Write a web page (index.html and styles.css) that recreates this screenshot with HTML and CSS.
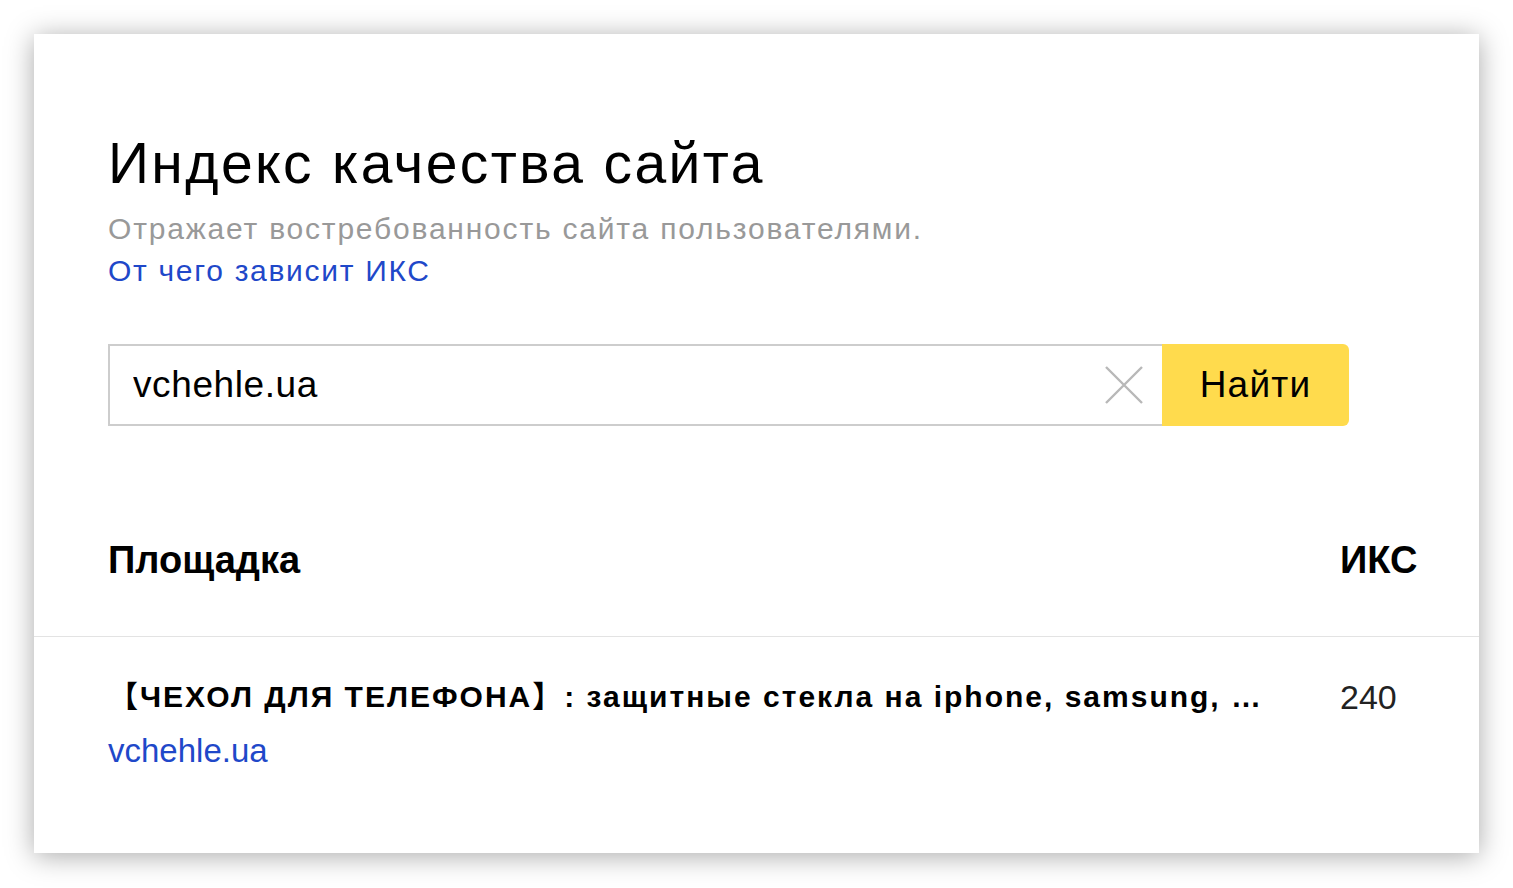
FILE: index.html
```html
<!DOCTYPE html>
<html lang="ru">
<head>
    <meta charset="UTF-8">
    <meta name="viewport" content="width=device-width, initial-scale=1.0">
    <title>Индекс качества сайта</title>
    <link rel="stylesheet" href="styles.css">
</head>
<body>
    <div class="card">
        <div class="card-top">
            <h1 class="title">Индекс качества сайта</h1>
            <p class="subtitle">Отражает востребованность сайта пользователями.</p>
            <a class="more" href="#">От чего зависит ИКС</a>

            <form class="search" onsubmit="return false">
                <div class="search-field">
                    <input type="text" class="search-input" value="vchehle.ua">
                    <button type="button" class="search-clear" aria-label="Очистить">
                        <svg width="38" height="38" viewBox="0 0 38 38">
                            <path d="M1 1 L37 37 M37 1 L1 37" stroke="#b8b8b8" stroke-width="2.4" fill="none"/>
                        </svg>
                    </button>
                </div>
                <button type="submit" class="search-btn">Найти</button>
            </form>
        </div>

        <div class="table">
            <div class="table-head">
                <span class="col-site">Площадка</span>
                <span class="col-iks">ИКС</span>
            </div>
            <div class="table-row">
                <div class="col-site">
                    <div class="site-title">【ЧЕХОЛ ДЛЯ ТЕЛЕФОНА】: защитные стекла на iphone, samsung, …</div>
                    <a class="site-link" href="#">vchehle.ua</a>
                </div>
                <div class="col-iks iks-value">240</div>
            </div>
        </div>
    </div>
</body>
</html>
```

FILE: styles.css
```css
body {
    margin: 0;
    padding: 34px;
    background: #fff;
    font-family: 'Liberation Sans', Arial, 'Noto Sans CJK SC', sans-serif;
    color: #000;
}

.card {
    width: 1445px;
    height: 819px;
    box-sizing: border-box;
    background: #fff;
    box-shadow: 0 3px 26px rgba(0, 0, 0, 0.34);
}

.card-top {
    padding: 97px 62px 0 74px;
}

.title {
    margin: 0 0 13px;
    font-size: 57px;
    line-height: 64px;
    font-weight: normal;
    letter-spacing: 2.4px;
}

.subtitle {
    margin: 0;
    font-size: 30px;
    line-height: 42px;
    color: #999;
    letter-spacing: 1.8px;
}

.more {
    display: block;
    font-size: 30px;
    line-height: 42px;
    color: #1f48c9;
    text-decoration: none;
    letter-spacing: 1.7px;
}

.search {
    display: flex;
    margin-top: 52px;
    height: 82px;
}

.search-field {
    display: flex;
    align-items: center;
    width: 1054px;
    box-sizing: border-box;
    border: 2px solid #cdcdcd;
    border-right: none;
    background: #fff;
}

.search-input {
    flex: 1;
    border: none;
    outline: none;
    padding: 0 0 0 23px;
    font-family: inherit;
    font-size: 37px;
    letter-spacing: 0.6px;
    color: #000;
    background: transparent;
}

.search-clear {
    border: none;
    background: none;
    padding: 0;
    margin-right: 19px;
    width: 38px;
    height: 38px;
    cursor: pointer;
}

.search-btn {
    width: 187px;
    border: none;
    border-radius: 0 6px 6px 0;
    background: #ffdb4d;
    font-family: inherit;
    font-size: 37px;
    letter-spacing: 1.2px;
    color: #000;
    cursor: pointer;
}

.table-head,
.table-row {
    display: grid;
    grid-template-columns: 1fr 77px;
    column-gap: 73px;
    padding: 0 62px 0 74px;
}

.table-head {
    margin-top: 110px;
    padding-bottom: 52px;
    border-bottom: 1px solid #e3e3e3;
    font-size: 38px;
    line-height: 48px;
    font-weight: bold;
}

.table-row {
    padding-top: 40px;
}

.site-title {
    font-size: 30px;
    line-height: 40px;
    font-weight: bold;
    letter-spacing: 2px;
    white-space: nowrap;
}

.site-link {
    display: block;
    margin-top: 14px;
    font-size: 33px;
    line-height: 40px;
    color: #1f48c9;
    text-decoration: none;
}

.iks-value {
    font-size: 34px;
    line-height: 40px;
    color: #222;
}
```
